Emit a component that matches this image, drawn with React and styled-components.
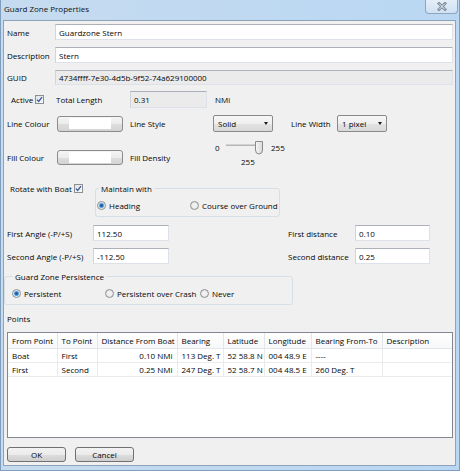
import React from 'react';
import styled, { createGlobalStyle } from 'styled-components';

const GlobalStyle = createGlobalStyle`
  html, body {
    margin: 0;
    padding: 0;
    background: #ffffff;
  }
  body {
    font-family: "Open Sans", "Noto Sans", sans-serif;
    font-size: 8px;
    color: #050505;
  }
`;

const Window = styled.div`
  width: 460px;
  height: 471px;
  box-sizing: border-box;
  display: flex;
  flex-direction: column;
  padding: 0 3px 4px 2px;
  border: 1px solid #7f9dbd;
  border-top: none;
  background: linear-gradient(to right, #c6dbef, #b9d7f3);
`;

const TitleBar = styled.div`
  height: 20px;
  flex-shrink: 0;
  display: flex;
  align-items: flex-start;
  padding-left: 1px;
`;

const TitleText = styled.span`
  line-height: 18px;
  color: #111111;
`;

const CloseButton = styled.div`
  margin-left: auto;
  margin-right: -2px;
  width: 33px;
  height: 14px;
  box-sizing: border-box;
  display: flex;
  align-items: center;
  justify-content: center;
  border: 1px solid #8fa4bd;
  border-top: none;
  border-radius: 0 0 4px 4px;
  background: linear-gradient(#e4eef8, #cfe1f2);
`;

const Client = styled.div`
  flex: 1;
  display: flex;
  flex-direction: column;
  gap: 7px;
  padding: 3px 2px 0 3px;
  background: #f0f0f0;
  border: 1px solid #8ea2b8;
`;

const Row = styled.div`
  display: flex;
  align-items: ${(p) => p.$align || 'center'};
  height: ${(p) => p.$h || 16}px;
  margin-top: ${(p) => p.$mt || 0}px;
  padding-left: ${(p) => p.$pl || 0}px;
  flex-shrink: 0;
`;

const Label = styled.span`
  width: ${(p) => (p.$w ? `${p.$w}px` : 'auto')};
  margin-left: ${(p) => p.$ml || 0}px;
  flex-shrink: 0;
  white-space: nowrap;
  line-height: 11px;
`;

const Field = styled.div`
  box-sizing: border-box;
  height: 100%;
  width: ${(p) => (p.$w ? `${p.$w}px` : 'auto')};
  flex: ${(p) => (p.$w ? '0 0 auto' : '1')};
  display: flex;
  align-items: center;
  padding: 0 3px;
  background: ${(p) => (p.$readOnly ? '#ebebeb' : '#ffffff')};
  border: 1px solid #dde2e8;
  border-top-color: #acb0b8;
  border-left-color: #d0d5dc;
`;

const Select = styled.div`
  box-sizing: border-box;
  width: ${(p) => p.$w}px;
  height: 100%;
  display: flex;
  align-items: center;
  justify-content: space-between;
  padding: 0 4px 0 4px;
  border: 1px solid #8a8a8a;
  border-radius: 2px;
  background: linear-gradient(#f6f6f6 0%, #efefef 50%, #e3e3e3 51%, #d9d9d9 100%);
`;

const Arrow = styled.span`
  width: 0;
  height: 0;
  border-left: 2.5px solid transparent;
  border-right: 2.5px solid transparent;
  border-top: 3px solid #1a1a1a;
`;

const ColourButton = styled.div`
  box-sizing: border-box;
  width: 66px;
  height: ${(p) => p.$h || 16}px;
  flex-shrink: 0;
  display: flex;
  align-items: center;
  justify-content: center;
  border: 1px solid #8c8c8c;
  border-radius: 3px;
  background: linear-gradient(#f4f4f4 0%, #ececec 50%, #dedede 51%, #d3d3d3 100%);
`;

const Swatch = styled.span`
  width: 42px;
  height: 11px;
  background: #ffffff;
`;

const CheckBox = styled.span`
  box-sizing: border-box;
  width: 9px;
  height: 9px;
  flex-shrink: 0;
  margin-left: ${(p) => p.$ml || 0}px;
  margin-top: ${(p) => p.$mt || 0}px;
  display: flex;
  align-items: center;
  justify-content: center;
  border: 1px solid #8e8f8f;
  background: linear-gradient(135deg, #dde3ea, #f8fafc);
`;

const Radio = styled.span`
  box-sizing: border-box;
  width: 9px;
  height: 9px;
  flex-shrink: 0;
  border-radius: 50%;
  border: 1px solid #8e8f8f;
  background: ${(p) =>
    p.$checked
      ? 'radial-gradient(circle, #1f4f8c 0, #2f79c2 1.6px, #9fcdf3 2.6px, #eef5fb 3.2px, #e2e2e2 100%)'
      : 'radial-gradient(circle, #f6f6f6 0, #e6e6e6 70%, #d4d4d4 100%)'};
`;

const Option = styled.div`
  display: flex;
  align-items: center;
  gap: 3px;
  width: ${(p) => (p.$w ? `${p.$w}px` : 'auto')};
  line-height: 11px;
  white-space: nowrap;
`;

const Group = styled.fieldset`
  box-sizing: border-box;
  width: ${(p) => p.$w}px;
  margin: 0 0 0 ${(p) => p.$ml || 0}px;
  padding: 6px 0 5px ${(p) => p.$pl || 0}px;
  border: 1px solid #d5dfe5;
  border-radius: 3px;
  display: flex;
  align-items: center;
  flex-shrink: 0;
`;

const Legend = styled.legend`
  margin-left: ${(p) => p.$ml || 0}px;
  padding: 0 2px;
  line-height: 11px;
`;

const Cluster = styled.div`
  display: flex;
  align-items: center;
  height: 15px;
  margin-bottom: 2px;
`;

const SliderBlock = styled.div`
  display: flex;
  flex-direction: column;
  height: 100%;
`;

const SliderLine = styled.div`
  display: flex;
  align-items: center;
  height: 17px;
  padding-left: 2px;
`;

const SliderValue = styled.span`
  line-height: 11px;
  padding-left: 28px;
`;

const PointsLabel = styled.div`
  height: 12px;
  line-height: 12px;
  flex-shrink: 0;
`;

const TableBox = styled.div`
  box-sizing: border-box;
  width: 446px;
  height: 106px;
  flex-shrink: 0;
  border: 1px solid #828790;
  background: #ffffff;
  overflow: hidden;
`;

const Grid = styled.table`
  width: 444px;
  table-layout: fixed;
  border-collapse: collapse;
  font-size: 8px;
`;

const Col = styled.col`
  width: ${(p) => p.$w}px;
`;

const HeadCell = styled.th`
  height: 15px;
  padding: 0 4px;
  font-weight: normal;
  text-align: left;
  white-space: nowrap;
  overflow: hidden;
  border-right: 1px solid #e3e5e8;
  border-bottom: 1px solid #e3e5e8;
  background: linear-gradient(#ffffff, #f7f8f9);
`;

const Cell = styled.td`
  height: 13px;
  padding: 0 4px;
  text-align: ${(p) => (p.$right ? 'right' : 'left')};
  white-space: nowrap;
  overflow: hidden;
  border-right: 1px solid #ebebeb;
  border-bottom: 1px solid #ebebeb;
`;

const ButtonRow = styled.div`
  display: flex;
  gap: 9px;
  margin-top: 2px;
  flex-shrink: 0;
`;

const Button = styled.button`
  box-sizing: border-box;
  width: 59px;
  height: 15px;
  padding: 0;
  font-family: inherit;
  font-size: 8px;
  color: #050505;
  border: 1px solid #707070;
  border-radius: 3px;
  background: linear-gradient(#f2f2f2 0%, #ebebeb 50%, #dddddd 51%, #cfcfcf 100%);
`;

const CheckMark = () => (
  <svg width="7" height="7" viewBox="0 0 7 7">
    <path d="M1 3.6 L2.7 5.4 L6 1.2" fill="none" stroke="#3c5a9c" strokeWidth="1.3" />
  </svg>
);

const CloseGlyph = () => (
  <svg width="10" height="9" viewBox="0 0 10 9">
    <path d="M2 1.5 L8 7.5 M8 1.5 L2 7.5" stroke="#7c8796" strokeWidth="2.8" strokeLinecap="square" />
    <path d="M2 1.5 L8 7.5 M8 1.5 L2 7.5" stroke="#f5f7fa" strokeWidth="1" />
  </svg>
);

const SliderDrawing = () => (
  <svg width="40" height="14" viewBox="0 0 40 14">
    <defs>
      <linearGradient id="thumb" x1="0" x2="1" y1="0" y2="0">
        <stop offset="0" stopColor="#f7f7f7" />
        <stop offset="1" stopColor="#d8d8d8" />
      </linearGradient>
    </defs>
    <rect x="1" y="3.5" width="33" height="1.5" fill="#b5b5b5" />
    <path d="M30.5 0.5 H37.5 V9 Q37.5 13 34 13 Q30.5 13 30.5 9 Z" fill="url(#thumb)" stroke="#8a8a8a" />
  </svg>
);

const headers = ['From Point', 'To Point', 'Distance From Boat', 'Bearing', 'Latitude', 'Longitude', 'Bearing From-To', 'Description'];
const widths = [49, 40, 80, 46, 41, 47, 71, 70];
const points = [
  ['Boat', 'First', '0.10 NMi', '113 Deg. T', '52 58.8 N', '004 48.9 E', '----', ''],
  ['First', 'Second', '0.25 NMi', '247 Deg. T', '52 58.7 N', '004 48.5 E', '260 Deg. T', ''],
];

const App = () => (
  <>
    <GlobalStyle />
    <Window>
      <TitleBar>
        <TitleText>Guard Zone Properties</TitleText>
        <CloseButton>
          <CloseGlyph />
        </CloseButton>
      </TitleBar>
      <Client>
        <Row>
          <Label $w={48}>Name</Label>
          <Field>Guardzone Stern</Field>
        </Row>
        <Row>
          <Label $w={48}>Description</Label>
          <Field>Stern</Field>
        </Row>
        <Row $h={15}>
          <Label $w={48}>GUID</Label>
          <Field $readOnly>4734ffff-7e30-4d5b-9f52-74a629100000</Field>
        </Row>
        <Row $h={17} $mt={-1} $pl={4}>
          <Label $w={24}>Active</Label>
          <CheckBox>
            <CheckMark />
          </CheckBox>
          <Label $w={74} $ml={12}>Total Length</Label>
          <Field $w={77} $readOnly>0.31</Field>
          <Label $ml={8}>NMi</Label>
        </Row>
        <Row $h={17}>
          <Label $w={50}>Line Colour</Label>
          <ColourButton $h={16}>
            <Swatch />
          </ColourButton>
          <Label $w={83} $ml={7}>Line Style</Label>
          <Select $w={60}>
            Solid
            <Arrow />
          </Select>
          <Label $w={46} $ml={18}>Line Width</Label>
          <Select $w={50}>
            1 pixel
            <Arrow />
          </Select>
        </Row>
        <Row $h={28} $align="flex-end">
          <Cluster>
            <Label $w={50}>Fill Colour</Label>
            <ColourButton $h={15}>
              <Swatch />
            </ColourButton>
            <Label $w={83} $ml={7}>Fill Density</Label>
          </Cluster>
          <SliderBlock>
            <SliderLine>
              <Label $w={10}>0</Label>
              <SliderDrawing />
              <Label $ml={6}>255</Label>
            </SliderLine>
            <SliderValue>255</SliderValue>
          </SliderBlock>
        </Row>
        <Row $h={34} $align="flex-start" $mt={9} $pl={3}>
          <Label $w={64}>Rotate with Boat</Label>
          <CheckBox $mt={1}>
            <CheckMark />
          </CheckBox>
          <Group $w={185} $ml={12} $pl={1}>
            <Legend $ml={2}>Maintain with</Legend>
            <Option $w={93}>
              <Radio $checked />
              Heading
            </Option>
            <Option>
              <Radio />
              Course over Ground
            </Option>
          </Group>
        </Row>
        <Row $mt={1}>
          <Label $w={86}>First Angle (-P/+S)</Label>
          <Field $w={76}>112.50</Field>
          <Label $w={67} $ml={119}>First distance</Label>
          <Field $w={75}>0.10</Field>
        </Row>
        <Row>
          <Label $w={86}>Second Angle (-P/+S)</Label>
          <Field $w={76}>-112.50</Field>
          <Label $w={67} $ml={119}>Second distance</Label>
          <Field $w={75}>0.25</Field>
        </Row>
        <Row $h={35} $align="flex-start">
          <Group $w={289} $ml={-3} $pl={7}>
            <Legend $ml={1}>Guard Zone Persistence</Legend>
            <Option $w={93}>
              <Radio $checked />
              Persistent
            </Option>
            <Option $w={95}>
              <Radio />
              Persistent over Crash
            </Option>
            <Option>
              <Radio />
              Never
            </Option>
          </Group>
        </Row>
        <PointsLabel>Points</PointsLabel>
        <TableBox>
          <Grid>
            <colgroup>
              {widths.map((w, i) => (
                <Col key={i} $w={w} />
              ))}
            </colgroup>
            <thead>
              <tr>
                {headers.map((h) => (
                  <HeadCell key={h}>{h}</HeadCell>
                ))}
              </tr>
            </thead>
            <tbody>
              {points.map((row, r) => (
                <tr key={r}>
                  {row.map((v, c) => (
                    <Cell key={c} $right={c === 2}>
                      {v}
                    </Cell>
                  ))}
                </tr>
              ))}
            </tbody>
          </Grid>
        </TableBox>
        <ButtonRow>
          <Button type="button">OK</Button>
          <Button type="button">Cancel</Button>
        </ButtonRow>
      </Client>
    </Window>
  </>
);

export default App;
